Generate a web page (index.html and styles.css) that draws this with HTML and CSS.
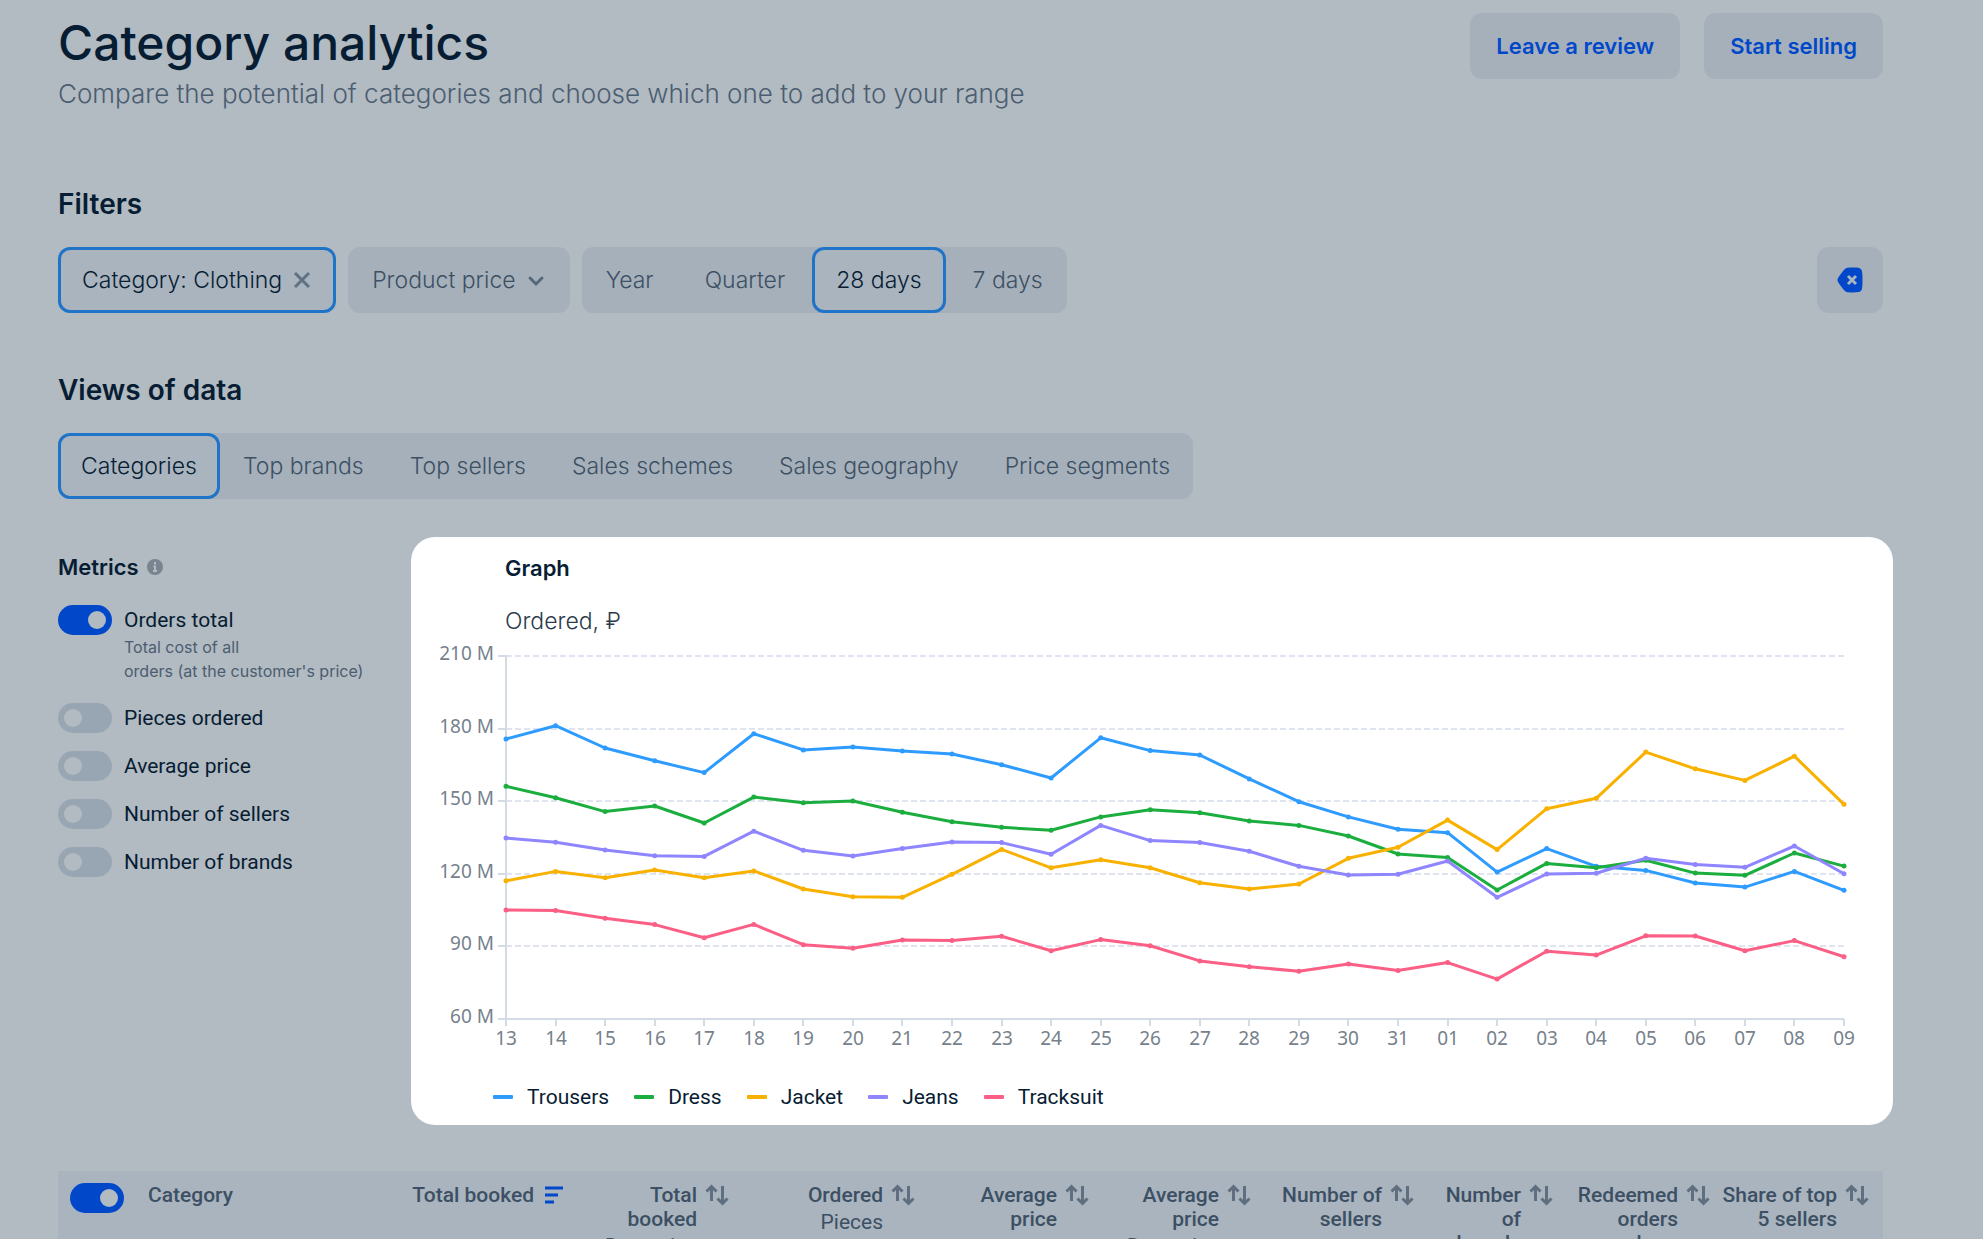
FILE: index.html
```html
<!DOCTYPE html>
<html lang="en">
<head>
<meta charset="utf-8">
<title>Category analytics</title>
<link rel="stylesheet" href="styles.css">
</head>
<body>
<svg class="sprite" aria-hidden="true">
  <symbol id="sort" viewBox="0 0 24 24">
    <path d="M6.500 18V3.500M1.500 8.500l5-5 5 5M17.500 3v17.500M12.500 15.500l5 5 5-5" fill="none" stroke="currentColor" stroke-width="3"/>
  </symbol>
</svg>
<main class="page">
  <header class="header">
    <div>
      <h1 class="title">Category analytics</h1>
      <p class="subtitle">Compare the potential of categories and choose which one to add to your range</p>
    </div>
    <div class="header-actions">
      <button class="action" type="button">Leave a review</button>
      <button class="action" type="button">Start selling</button>
    </div>
  </header>

  <section class="block">
    <h2 class="heading">Filters</h2>
    <div class="filters">
      <button class="chip selected" type="button">Category: Clothing
        <svg class="chip-icon" viewBox="0 0 20 20"><path d="M3 3l14 14M17 3L3 17" fill="none" stroke="#617181" stroke-width="3"/></svg>
      </button>
      <button class="chip" type="button">Product price
        <svg class="chip-icon" viewBox="0 0 20 20"><path d="M4 8l6 6 6-6" fill="none" stroke="#566779" stroke-width="3" stroke-linecap="round"/></svg>
      </button>
      <div class="segments periods">
        <button class="chip" type="button">Year</button>
        <button class="chip" type="button">Quarter</button>
        <button class="chip selected" type="button">28 days</button>
        <button class="chip" type="button">7 days</button>
      </div>
      <button class="clear" type="button" aria-label="Clear filters">
        <svg viewBox="0 0 26 26" width="26" height="26"><path d="M1.200 10.800C3 7.800 5.500 4.500 8.200 1.800 9.600.6 12 .5 16 .5c4.500 0 7.200.3 8.300 1.900C25.300 4 25.500 8 25.500 13s-.2 9-1.200 10.600c-1.100 1.600-3.800 1.900-8.300 1.900-4 0-6.400-.1-7.800-1.300C5.500 21.500 3 18.200 1.200 15.200c-.9-1.500-.9-2.900 0-4.400z" fill="#0048c9"/><path d="M11 9l8 8M19 9l-8 8" stroke="#a9b4c0" stroke-width="3"/></svg>
      </button>
    </div>
  </section>

  <section class="block">
    <h2 class="heading">Views of data</h2>
    <nav class="segments views">
      <button class="chip selected" type="button">Categories</button>
      <button class="chip" type="button">Top brands</button>
      <button class="chip" type="button">Top sellers</button>
      <button class="chip" type="button">Sales schemes</button>
      <button class="chip" type="button">Sales geography</button>
      <button class="chip" type="button">Price segments</button>
    </nav>
  </section>

  <div class="content">
    <aside class="metrics">
      <h3 class="subheading">Metrics
        <svg viewBox="0 0 16 16" width="16" height="16"><circle cx="8" cy="8" r="8" fill="#78848f"/><path d="M8 3v2.500M6.500 7.500H8V12M6 12h4" fill="none" stroke="#b2bac2" stroke-width="2"/></svg>
      </h3>
      <label class="metric"><input class="toggle" type="checkbox" checked><span>Orders total<small class="hint">Total cost of all<br>orders (at the customer's price)</small></span></label>
      <label class="metric"><input class="toggle" type="checkbox"><span>Pieces ordered</span></label>
      <label class="metric"><input class="toggle" type="checkbox"><span>Average price</span></label>
      <label class="metric"><input class="toggle" type="checkbox"><span>Number of sellers</span></label>
      <label class="metric"><input class="toggle" type="checkbox"><span>Number of brands</span></label>
    </aside>

    <section class="card">
      <h3 class="subheading card-title">Graph</h3>
      <p class="unit">Ordered, ₽</p>
      <svg class="chart" id="chart" role="img" aria-label="Ordered by day"></svg>
      <ul class="legend">
        <li class="series trousers">Trousers</li>
        <li class="series dress">Dress</li>
        <li class="series jacket">Jacket</li>
        <li class="series jeans">Jeans</li>
        <li class="series tracksuit">Tracksuit</li>
      </ul>
    </section>
  </div>

  <table class="table">
    <colgroup>
      <col class="c-toggle"><col class="c-category"><col class="c-booked"><col class="c-dynamics"><col class="c-ordered"><col class="c-price"><col class="c-pricedyn"><col class="c-sellers"><col class="c-brands"><col class="c-redeemed"><col>
    </colgroup>
    <thead>
      <tr>
        <th class="pick"><input class="toggle" type="checkbox" checked aria-label="Select all categories"></th>
        <th class="name">Category</th>
        <th><div class="cell"><span>Total booked</span><svg class="sort" viewBox="0 0 24 24"><path d="M3 5h18M3 12h13M3 19h9" stroke="#0048c9" stroke-width="3" fill="none"/></svg></div></th>
        <th><div class="cell"><span>Total<br>booked<small>Dynamics</small></span><svg class="sort"><use href="#sort"/></svg></div></th>
        <th><div class="cell"><span>Ordered<small>Pieces</small></span><svg class="sort"><use href="#sort"/></svg></div></th>
        <th><div class="cell"><span>Average<br>price</span><svg class="sort"><use href="#sort"/></svg></div></th>
        <th><div class="cell"><span>Average<br>price<small>Dynamics</small></span><svg class="sort"><use href="#sort"/></svg></div></th>
        <th><div class="cell"><span>Number of<br>sellers</span><svg class="sort"><use href="#sort"/></svg></div></th>
        <th><div class="cell"><span>Number<br>of<br>brands</span><svg class="sort"><use href="#sort"/></svg></div></th>
        <th><div class="cell"><span>Redeemed<br>orders<br>share</span><svg class="sort"><use href="#sort"/></svg></div></th>
        <th><div class="cell"><span>Share of top<br>5 sellers</span><svg class="sort"><use href="#sort"/></svg></div></th>
      </tr>
    </thead>
  </table>
</main>
<script src="chart.js"></script>
</body>
</html>
```
FILE: styles.css
```css
* { box-sizing: border-box; }

body {
  margin: 0;
  height: 100vh;
  overflow: hidden;
  background: #b2bac2;
  color: #071d33;
  font-family: Inter, "Liberation Sans", sans-serif;
  font-size: 21px;
  line-height: 24px;
}

h1, h2, h3, p, ul { margin: 0; padding: 0; }

button {
  border: 0;
  font: inherit;
  color: inherit;
  cursor: pointer;
}

.sprite { display: none; }

.page { padding: 13px 100px 0 58px; }

.header {
  display: flex;
  justify-content: space-between;
  align-items: flex-start;
}

.title {
  font-size: 48px;
  line-height: 60px;
  font-weight: 500;
}

.subtitle {
  margin-top: 5px;
  font-size: 26px;
  line-height: 32px;
  font-weight: 300;
  color: #4b5d70;
}

.header-actions { display: flex; gap: 24px; }

.action {
  height: 66px;
  padding: 0 26px;
  border-radius: 12px;
  background: #a6b0bb;
  color: #0048c9;
  font-size: 22px;
  font-weight: 600;
}

.block { margin-top: 77px; }
.block + .block { margin-top: 60px; }

.heading {
  margin-bottom: 26px;
  font-size: 28px;
  line-height: 34px;
  font-weight: 600;
}

.filters { display: flex; gap: 12px; }

.segments {
  display: flex;
  width: fit-content;
  border-radius: 12px;
  background: #a6b0bb;
}

.periods { gap: 3px; }

.chip {
  display: flex;
  align-items: center;
  gap: 10px;
  height: 66px;
  padding: 0 24px;
  border-radius: 12px;
  background: #a6b0bb;
  color: #3d5063;
  font-size: 23px;
  font-weight: 300;
}

.views .chip { padding: 0 23px; }

.chip.selected {
  background: #aab4bf;
  color: #071d33;
  box-shadow: inset 0 0 0 3px #1f74c7;
}

.chip-icon { width: 20px; height: 20px; }

.clear {
  display: grid;
  place-items: center;
  width: 66px;
  height: 66px;
  margin-left: auto;
  border-radius: 12px;
  background: #a6b0bb;
}

.content {
  display: grid;
  grid-template-columns: 353px minmax(0, 1fr);
  margin: 38px -10px 0 0;
}

.metrics { padding-top: 16px; }

.subheading {
  display: flex;
  align-items: center;
  gap: 8px;
  font-size: 22px;
  line-height: 28px;
  font-weight: 600;
}

.metric {
  display: flex;
  gap: 12px;
  margin-top: 18px;
  font-family: Roboto, Inter, sans-serif;
  line-height: 30px;
}

.subheading + .metric { margin: 24px 0 20px; }

.hint {
  display: block;
  font-family: Inter, sans-serif;
  font-size: 16px;
  line-height: 24px;
  color: #4b5d70;
}

.toggle {
  appearance: none;
  flex: none;
  display: block;
  width: 54px;
  height: 30px;
  margin: 0;
  padding: 6px;
  border-radius: 15px;
  background: #98a6b4;
}

.toggle::before {
  content: "";
  display: block;
  width: 18px;
  height: 18px;
  border-radius: 50%;
  background: #b2bac2;
}

.toggle:checked { background: #0048c9; }
.toggle:checked::before { margin-left: auto; }

.card {
  padding: 17px 0 13px;
  border-radius: 24px;
  background: #fff;
}

.card-title, .unit { margin-left: 94px; }

.unit {
  margin-top: 25px;
  font-size: 23px;
  line-height: 28px;
  font-weight: 300;
  color: #2c3a4c;
}

.chart {
  display: block;
  width: 100%;
  height: 420px;
  font-family: "Noto Sans", sans-serif;
  font-size: 19px;
}

.tick { fill: #76818c; }
.axis { stroke: #d3dbe5; stroke-width: 2; }
.grid { stroke: #dfe4f0; stroke-width: 2; stroke-dasharray: 6 3; }
.line { fill: none; stroke-width: 3; stroke-linejoin: round; }

.legend {
  display: flex;
  gap: 25px;
  margin: 27px 0 0 82px;
  list-style: none;
  font-family: Roboto, Inter, sans-serif;
  line-height: 30px;
}

.series { display: flex; align-items: center; gap: 14px; }

.series::before {
  content: "";
  width: 20px;
  height: 4px;
  border-radius: 1px;
  background: var(--c);
}

.trousers { --c: #2e9bff; }
.dress { --c: #1bae3e; }
.jacket { --c: #f9b100; }
.jeans { --c: #8f85ff; }
.tracksuit { --c: #fb5f85; }

.table {
  width: 100%;
  margin-top: 46px;
  border-collapse: collapse;
  table-layout: fixed;
  background: #a9b4bf;
  color: #3d5063;
  font-family: Roboto, Inter, sans-serif;
}

th {
  padding: 12px 14px 12px 0;
  font-weight: 500;
  text-align: right;
  vertical-align: top;
}

th.pick { padding-left: 12px; }
th.name { text-align: left; }
th small { display: block; font-size: 21px; line-height: 30px; font-weight: 400; }

.cell { display: flex; justify-content: flex-end; gap: 8px; }
.cell span { white-space: nowrap; }
.sort { flex: none; width: 24px; height: 24px; color: #5f6f7f; }

.c-toggle { width: 90px; }
.c-category { width: 240px; }
.c-booked { width: 192px; }
.c-dynamics { width: 163px; }
.c-ordered { width: 186px; }
.c-price { width: 174px; }
.c-pricedyn { width: 162px; }
.c-sellers { width: 163px; }
.c-brands { width: 139px; }
.c-redeemed { width: 157px; }
```
FILE: chart.js
```js
const days = ["13", "14", "15", "16", "17", "18", "19", "20", "21", "22", "23", "24", "25", "26", "27", "28", "29", "30", "31", "01", "02", "03", "04", "05", "06", "07", "08", "09"];

// Millions of roubles ordered per day, painted in this order.
const series = [
  { color: "#2e9bff", values: [175.7, 181.2, 172, 166.7, 161.8, 177.9, 171.2, 172.4, 170.7, 169.5, 165.1, 159.6, 176.2, 170.9, 169.1, 159.2, 149.8, 143.5, 138.4, 137, 120.7, 130.4, 123.1, 121.4, 116.2, 114.5, 121, 113.2] },
  { color: "#1bae3e", values: [156.2, 151.4, 145.7, 148, 141, 151.7, 149.4, 150.1, 145.4, 141.5, 139.2, 138, 143.5, 146.5, 145.2, 141.8, 140, 135.6, 128.2, 126.7, 113.3, 124.3, 122.5, 125.6, 120.3, 119.4, 128.6, 123.2] },
  { color: "#f9b100", values: [117.1, 121, 118.4, 121.6, 118.4, 121.2, 113.7, 110.5, 110.3, 119.8, 130.1, 122.5, 125.8, 122.5, 116.3, 113.7, 115.8, 126.4, 131, 142.2, 130, 146.9, 151.2, 170.3, 163.4, 158.6, 168.6, 148.7] },
  { color: "#8f85ff", values: [134.8, 133, 129.8, 127.5, 127.2, 137.6, 129.7, 127.4, 130.5, 133.1, 132.9, 128.1, 140, 133.7, 132.9, 129.3, 123.1, 119.5, 119.8, 125.3, 110.3, 119.9, 120.2, 126.4, 123.9, 122.7, 131.5, 120] },
  { color: "#fb5f85", values: [105, 104.8, 101.6, 99, 93.6, 99.1, 90.7, 89.2, 92.6, 92.5, 94.2, 88.2, 92.8, 90.3, 84, 81.6, 79.7, 82.7, 80, 83.3, 76.5, 88, 86.4, 94.4, 94.3, 88.2, 92.4, 85.7] }
];

const chart = document.getElementById("chart");
const plot = { left: 95, right: 49, top: 21, height: 363 };

function draw() {
  const end = chart.clientWidth - plot.right;
  const left = plot.left;
  const bottom = plot.top + plot.height;
  const x = i => left + (end - left) * i / (days.length - 1);
  const y = v => bottom - (v - 60) * plot.height / 150;
  let out = "";

  for (let v = 60; v <= 210; v += 30) {
    const py = Math.round(y(v));
    out += `<text class="tick" x="${left - 12}" y="${py + 4}" text-anchor="end">${v} M</text>`;
    out += `<line class="axis" x1="${left - 8}" y1="${py}" x2="${left}" y2="${py}"/>`;
    out += `<line class="${v === 60 ? "axis" : "grid"}" x1="${left}" y1="${py}" x2="${end}" y2="${py}"/>`;
  }
  out += `<line class="axis" x1="${left}" y1="${plot.top - 1}" x2="${left}" y2="${bottom}"/>`;
  days.forEach((d, i) => {
    const px = Math.round(x(i));
    out += `<line class="axis" x1="${px}" y1="${bottom}" x2="${px}" y2="${bottom + 7}"/>`;
    out += `<text class="tick" x="${px}" y="${bottom + 26}" text-anchor="middle">${d}</text>`;
  });
  for (const s of series) {
    const pts = s.values.map((v, i) => [x(i).toFixed(1), y(v).toFixed(1)]);
    out += `<polyline class="line" stroke="${s.color}" points="${pts.join(" ")}"/>`;
    out += pts.map(([a, b]) => `<circle cx="${a}" cy="${b}" r="2.5" fill="${s.color}"/>`).join("");
  }
  chart.innerHTML = out;
}

draw();
window.addEventListener("resize", draw);
```
